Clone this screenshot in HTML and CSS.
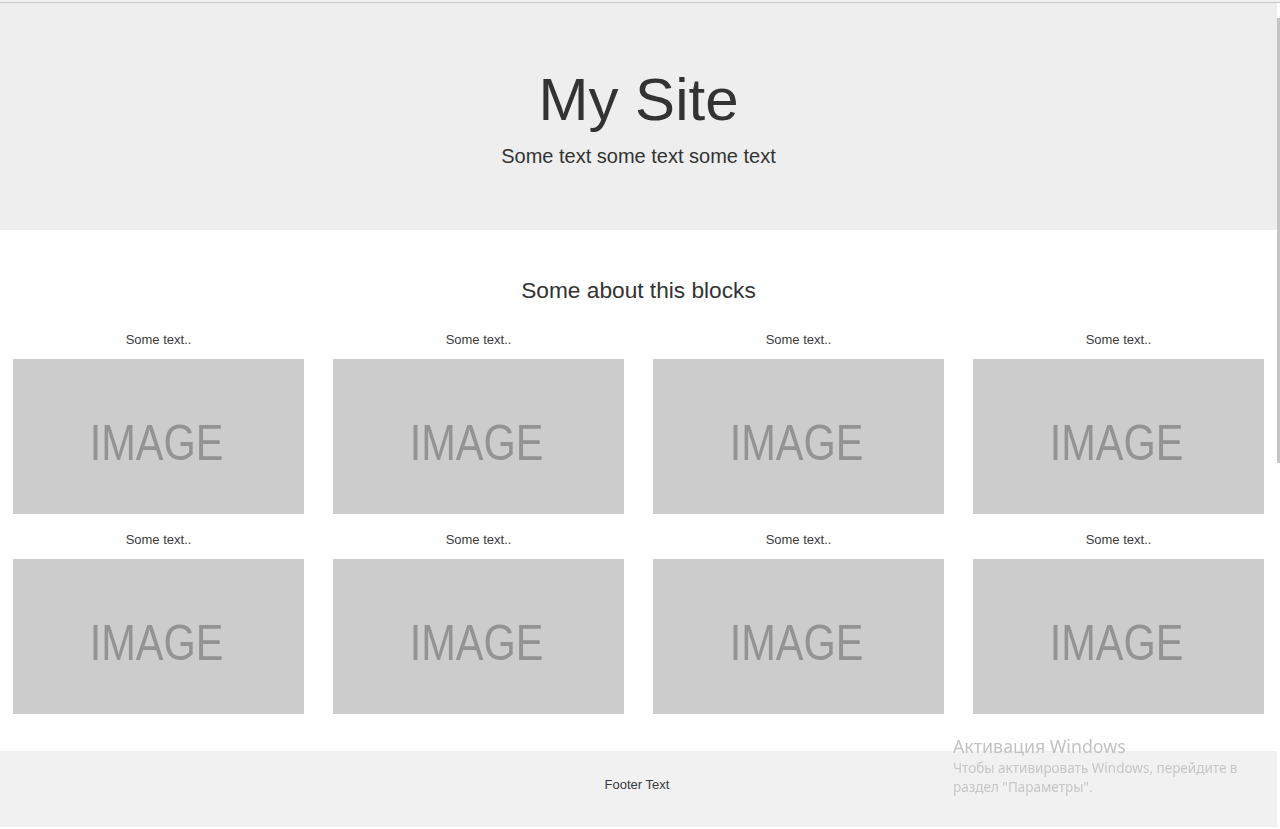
FILE: index.html
```html
<!DOCTYPE html>
<html lang="en">
<head>
<meta charset="utf-8">
<title>My Site</title>
<link rel="stylesheet" href="styles.css">
</head>
<body>
<div class="frame">
  <div class="page">
    <header class="hero">
      <h1 class="hero-title">My Site</h1>
      <p class="hero-text">Some text some text some text</p>
    </header>
    <main class="blocks">
      <h3 class="blocks-title">Some about this blocks</h3>
      <div class="grid">
        <div class="card"><p class="card-text">Some text..</p><div class="thumb"><span class="thumb-label">IMAGE</span></div></div>
        <div class="card"><p class="card-text">Some text..</p><div class="thumb"><span class="thumb-label">IMAGE</span></div></div>
        <div class="card"><p class="card-text">Some text..</p><div class="thumb"><span class="thumb-label">IMAGE</span></div></div>
        <div class="card"><p class="card-text">Some text..</p><div class="thumb"><span class="thumb-label">IMAGE</span></div></div>
        <div class="card"><p class="card-text">Some text..</p><div class="thumb"><span class="thumb-label">IMAGE</span></div></div>
        <div class="card"><p class="card-text">Some text..</p><div class="thumb"><span class="thumb-label">IMAGE</span></div></div>
        <div class="card"><p class="card-text">Some text..</p><div class="thumb"><span class="thumb-label">IMAGE</span></div></div>
        <div class="card"><p class="card-text">Some text..</p><div class="thumb"><span class="thumb-label">IMAGE</span></div></div>
      </div>
    </main>
    <footer class="footer">
      <p class="footer-text">Footer Text</p>
    </footer>
  </div>
  <div class="scrollbar"><div class="scrollbar-thumb"></div></div>
</div>
<div class="activation">
  <div class="activation-title">Активация Windows</div>
  <div class="activation-text">Чтобы активировать Windows, перейдите в<br>раздел "Параметры".</div>
</div>
</body>
</html>
```
FILE: styles.css
```css
html, body {
  margin: 0;
  padding: 0;
  background: #ffffff;
}

body {
  font-family: "Liberation Sans", Arial, sans-serif;
  color: #333333;
  border-top: 2px solid #f2f2f2;
  overflow: hidden;
  height: 827px;
}

.frame {
  display: flex;
  align-items: flex-start;
  border-top: 1px solid #c6c6c6;
}

.page {
  width: 1277px;
  flex: none;
}

.scrollbar {
  width: 3px;
  flex: none;
  height: 826px;
  background: #ffffff;
}

.scrollbar-thumb {
  margin-top: 15px;
  height: 445px;
  background: #c4c4c4;
}

.hero {
  background: #eeeeee;
  text-align: center;
  padding: 64px 0 60px;
  height: 227px;
  box-sizing: border-box;
}

.hero-title {
  margin: 0;
  font-size: 60px;
  line-height: 66px;
  font-weight: 400;
}

.hero-text {
  margin: 9px 0 0;
  font-size: 20px;
  line-height: 28px;
}

.blocks {
  padding: 48px 0 21px;
}

.blocks-title {
  margin: 0 0 27px;
  text-align: center;
  font-size: 22.7px;
  line-height: 25px;
  font-weight: 400;
}

.grid {
  display: grid;
  grid-template-columns: repeat(4, 291px);
  column-gap: 29px;
  padding: 0 13px;
}

.card {
  margin-bottom: 16px;
}

.card-text {
  margin: 0 0 9px;
  text-align: center;
  font-size: 13px;
  line-height: 20px;
  color: #3a3a3a;
}

.thumb {
  height: 155px;
  background: #cccccc;
  display: flex;
  align-items: center;
  justify-content: center;
  padding-top: 12px;
  padding-right: 4px;
  box-sizing: border-box;
}

.thumb-label {
  font-size: 50px;
  line-height: 50px;
  color: #939393;
  transform: scaleX(0.83);
  filter: blur(0.5px);
}

.footer {
  background: #f1f1f1;
  height: 76px;
  display: flex;
  align-items: center;
  justify-content: center;
}

.footer-text {
  margin: 0;
  font-size: 13px;
  line-height: 20px;
  padding-bottom: 8px;
  padding-right: 3px;
  color: #3a3a3a;
}

.activation {
  position: fixed;
  left: 953px;
  top: 734px;
  font-family: "Noto Sans", "Open Sans", sans-serif;
  color: #c2c2c2;
}

.activation-title {
  font-size: 17.8px;
  line-height: 25px;
}

.activation-text {
  font-size: 13.5px;
  line-height: 19px;
  color: #c6c6c6;
}
```
